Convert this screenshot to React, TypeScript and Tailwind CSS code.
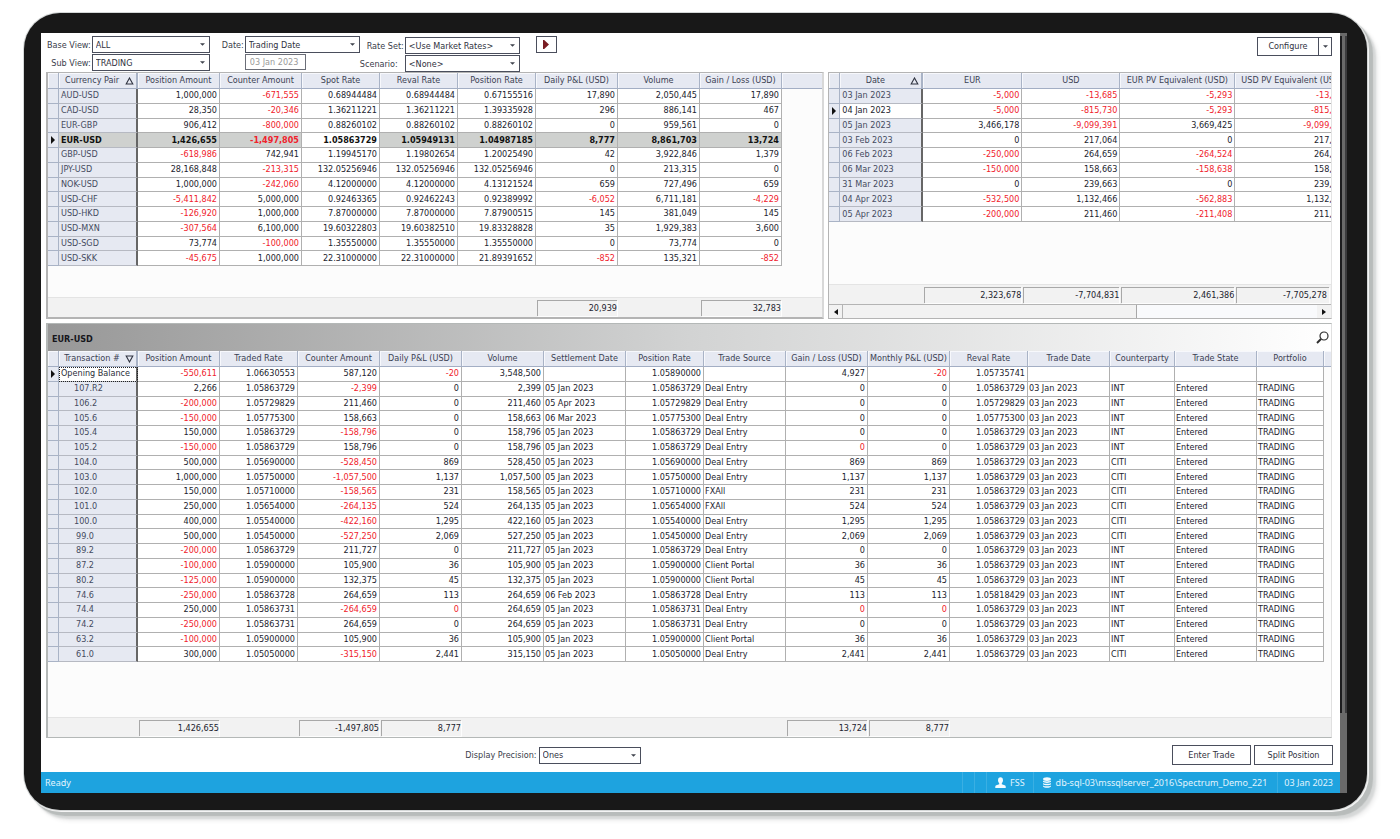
import React from "react";

type Align = "left" | "right";
type Column = { title: string; width: number; align: Align; whiteWhenSelected?: boolean };

const num = (title: string, width: number): Column => ({ title, width, align: "right" });
const txt = (title: string, width: number): Column => ({ title, width, align: "left" });

/* ---------- data ---------- */

const pairColumns: Column[] = [
  num("Position Amount", 82),
  num("Counter Amount", 82),
  { title: "Spot Rate", width: 78, align: "right", whiteWhenSelected: true },
  num("Reval Rate", 78),
  num("Position Rate", 78),
  num("Daily P&L (USD)", 82),
  num("Volume", 82),
  num("Gain / Loss (USD)", 82),
];

const pairRows: string[][] = [
  ["AUD-USD", "1,000,000", "-671,555", "0.68944484", "0.68944484", "0.67155516", "17,890", "2,050,445", "17,890"],
  ["CAD-USD", "28,350", "-20,346", "1.36211221", "1.36211221", "1.39335928", "296", "886,141", "467"],
  ["EUR-GBP", "906,412", "-800,000", "0.88260102", "0.88260102", "0.88260102", "0", "959,561", "0"],
  ["EUR-USD", "1,426,655", "-1,497,805", "1.05863729", "1.05949131", "1.04987185", "8,777", "8,861,703", "13,724"],
  ["GBP-USD", "-618,986", "742,941", "1.19945170", "1.19802654", "1.20025490", "42", "3,922,846", "1,379"],
  ["JPY-USD", "28,168,848", "-213,315", "132.05256946", "132.05256946", "132.05256946", "0", "213,315", "0"],
  ["NOK-USD", "1,000,000", "-242,060", "4.12000000", "4.12000000", "4.13121524", "659", "727,496", "659"],
  ["USD-CHF", "-5,411,842", "5,000,000", "0.92463365", "0.92462243", "0.92389992", "-6,052", "6,711,181", "-4,229"],
  ["USD-HKD", "-126,920", "1,000,000", "7.87000000", "7.87000000", "7.87900515", "145", "381,049", "145"],
  ["USD-MXN", "-307,564", "6,100,000", "19.60322803", "19.60382510", "19.83328828", "35", "1,929,383", "3,600"],
  ["USD-SGD", "73,774", "-100,000", "1.35550000", "1.35550000", "1.35550000", "0", "73,774", "0"],
  ["USD-SKK", "-45,675", "1,000,000", "22.31000000", "22.31000000", "21.89391652", "-852", "135,321", "-852"],
];

const dateColumns: Column[] = [
  num("EUR", 99),
  num("USD", 98),
  num("EUR PV Equivalent (USD)", 115),
  num("USD PV Equivalent (USD)", 115),
];

const dateRows: string[][] = [
  ["03 Jan 2023", "-5,000", "-13,685", "-5,293", "-13,685"],
  ["04 Jan 2023", "-5,000", "-815,730", "-5,293", "-815,730"],
  ["05 Jan 2023", "3,466,178", "-9,099,391", "3,669,425", "-9,099,391"],
  ["03 Feb 2023", "0", "217,064", "0", "217,014"],
  ["06 Feb 2023", "-250,000", "264,659", "-264,524", "264,524"],
  ["06 Mar 2023", "-150,000", "158,663", "-158,638", "158,638"],
  ["31 Mar 2023", "0", "239,663", "0", "239,417"],
  ["04 Apr 2023", "-532,500", "1,132,466", "-562,883", "1,132,101"],
  ["05 Apr 2023", "-200,000", "211,460", "-211,408", "211,408"],
];

const tradeColumns: Column[] = [
  num("Position Amount", 82),
  num("Traded Rate", 78),
  num("Counter Amount", 82),
  num("Daily P&L (USD)", 82),
  num("Volume", 82),
  txt("Settlement Date", 82),
  num("Position Rate", 78),
  txt("Trade Source", 82),
  num("Gain / Loss (USD)", 82),
  num("Monthly P&L (USD)", 82),
  num("Reval Rate", 78),
  txt("Trade Date", 82),
  txt("Counterparty", 65),
  txt("Trade State", 82),
  txt("Portfolio", 67),
];

/* id, position, traded rate, counter, p&l, volume, settlement, source, gain, monthly, reval, counterparty */
const trades: string[][] = [
  ["107.R2", "2,266", "1.05863729", "-2,399", "0", "2,399", "05 Jan 2023", "Deal Entry", "0", "0", "1.05863729", "INT"],
  ["106.2", "-200,000", "1.05729829", "211,460", "0", "211,460", "05 Apr 2023", "Deal Entry", "0", "0", "1.05729829", "INT"],
  ["105.6", "-150,000", "1.05775300", "158,663", "0", "158,663", "06 Mar 2023", "Deal Entry", "0", "0", "1.05775300", "INT"],
  ["105.4", "150,000", "1.05863729", "-158,796", "0", "158,796", "05 Jan 2023", "Deal Entry", "0", "0", "1.05863729", "INT"],
  ["105.2", "-150,000", "1.05863729", "158,796", "0", "158,796", "05 Jan 2023", "Deal Entry", "!0", "0", "1.05863729", "INT"],
  ["104.0", "500,000", "1.05690000", "-528,450", "869", "528,450", "05 Jan 2023", "Deal Entry", "869", "869", "1.05863729", "CITI"],
  ["103.0", "1,000,000", "1.05750000", "-1,057,500", "1,137", "1,057,500", "05 Jan 2023", "Deal Entry", "1,137", "1,137", "1.05863729", "CITI"],
  ["102.0", "150,000", "1.05710000", "-158,565", "231", "158,565", "05 Jan 2023", "FXAll", "231", "231", "1.05863729", "CITI"],
  ["101.0", "250,000", "1.05654000", "-264,135", "524", "264,135", "05 Jan 2023", "FXAll", "524", "524", "1.05863729", "CITI"],
  ["100.0", "400,000", "1.05540000", "-422,160", "1,295", "422,160", "05 Jan 2023", "Deal Entry", "1,295", "1,295", "1.05863729", "CITI"],
  ["99.0", "500,000", "1.05450000", "-527,250", "2,069", "527,250", "05 Jan 2023", "Deal Entry", "2,069", "2,069", "1.05863729", "CITI"],
  ["89.2", "-200,000", "1.05863729", "211,727", "0", "211,727", "05 Jan 2023", "Deal Entry", "0", "0", "1.05863729", "INT"],
  ["87.2", "-100,000", "1.05900000", "105,900", "36", "105,900", "05 Jan 2023", "Client Portal", "36", "36", "1.05863729", "INT"],
  ["80.2", "-125,000", "1.05900000", "132,375", "45", "132,375", "05 Jan 2023", "Client Portal", "45", "45", "1.05863729", "INT"],
  ["74.6", "-250,000", "1.05863728", "264,659", "113", "264,659", "06 Feb 2023", "Deal Entry", "113", "113", "1.05818429", "INT"],
  ["74.4", "250,000", "1.05863731", "-264,659", "!0", "264,659", "05 Jan 2023", "Deal Entry", "!0", "!0", "1.05863729", "INT"],
  ["74.2", "-250,000", "1.05863731", "264,659", "0", "264,659", "05 Jan 2023", "Deal Entry", "0", "0", "1.05863729", "INT"],
  ["63.2", "-100,000", "1.05900000", "105,900", "36", "105,900", "05 Jan 2023", "Client Portal", "36", "36", "1.05863729", "INT"],
  ["61.0", "300,000", "1.05050000", "-315,150", "2,441", "315,150", "05 Jan 2023", "Deal Entry", "2,441", "2,441", "1.05863729", "CITI"],
];

const tradeRows: string[][] = [
  ["Opening Balance", "-550,611", "1.06630553", "587,120", "-20", "3,548,500", "", "1.05890000", "", "4,927", "-20", "1.05735741", "", "", "", ""],
  ...trades.map(([id, pos, rate, counter, pl, vol, settle, source, gain, monthly, reval, party]) => [
    id, pos, rate, counter, pl, vol, settle, rate, source, gain, monthly, reval, "03 Jan 2023", party, "Entered", "TRADING",
  ]),
];

/* ---------- small drawings ---------- */

function SortMark({ down = false }: { down?: boolean }) {
  return (
    <svg viewBox="0 0 9 8" className="h-2 w-[9px] shrink-0" fill="none" stroke="#2f3340" strokeWidth="1.1">
      <path d={down ? "M1.2 1h6.6L4.5 7z" : "M1.2 7h6.6L4.5 1z"} />
    </svg>
  );
}

function Pointer() {
  return (
    <svg viewBox="0 0 4 8" className="mx-auto h-2 w-1" fill="#111">
      <path d="M0 0l4 4-4 4z" />
    </svg>
  );
}

function Caret() {
  return (
    <svg viewBox="0 0 6 3" className="h-[3px] w-[5px]" fill="#3f434d">
      <path d="M0 0h6L3 3z" />
    </svg>
  );
}

/* ---------- controls ---------- */

function Dropdown({ id, value, className }: { id: string; value: string; className: string }) {
  return (
    <div className={`relative ${className}`}>
      <select
        id={id}
        className="block h-[17px] w-full appearance-none border border-[#4a4e5c] bg-white pl-[3px] pr-4 text-[9px] leading-[14px] text-[#30323e]"
      >
        <option>{value}</option>
      </select>
      <span className="pointer-events-none absolute inset-y-0 right-[5px] flex items-center">
        <Caret />
      </span>
    </div>
  );
}

function FieldLabel({ id, children }: { id: string; children: React.ReactNode }) {
  return (
    <label htmlFor={id} className="self-center text-right leading-3 whitespace-nowrap text-[#3a3d4a]">
      {children}
    </label>
  );
}

/* ---------- grid ---------- */

type GridProps = {
  keyTitle: string;
  keyWidth: number;
  sortDown?: boolean;
  columns: Column[];
  rows: string[][];
  current: number;
  highlight?: "row" | "key" | "focus";
  indentKeys?: boolean;
  filler?: boolean;
  className: string;
};

const headCell = "h-4 border-r border-b border-r-[#a9b3c6] border-b-[#a3aec4] bg-[#e6e9f2] p-0 font-normal text-[#3b4152] shadow-[inset_1px_1px_0_#f7f8fc]";

function Grid({ keyTitle, keyWidth, sortDown, columns, rows, current, highlight, indentKeys, filler, className }: GridProps) {
  const keyClass = (i: number, key: string) => {
    if (i === current && highlight === "row") return "bg-[#cfd1cf] pl-0.5 font-bold text-[#111]";
    if (i === current && highlight === "key") return "bg-white pl-0.5 font-normal text-[#22242e]";
    if (i === current && highlight === "focus")
      return "bg-white pl-0.5 font-normal text-[#2a2d38] outline-1 -outline-offset-1 outline-dotted outline-[#222]";
    const indent = !indentKeys ? "pl-0.5" : key.length > 4 ? "pl-[15px]" : "pl-[17px]";
    return `bg-[#e6e9f2] font-normal text-[#454b60] ${indent}`;
  };
  return (
    <table className={`table-fixed border-separate border-spacing-0 bg-white whitespace-nowrap ${className}`}>
      <colgroup>
        <col style={{ width: 11 }} />
        <col style={{ width: keyWidth }} />
        {columns.map((c) => (
          <col key={c.title} style={{ width: c.width }} />
        ))}
        {filler && <col />}
      </colgroup>
      <thead>
        <tr>
          <th className={headCell} aria-label="Current row" />
          <th className={`${headCell} border-r-2 border-r-[#666]`}>
            <div className="flex items-center pr-0.5">
              <span className="flex-1">{keyTitle}</span>
              <SortMark down={sortDown} />
            </div>
          </th>
          {columns.map((c) => (
            <th key={c.title} className={headCell}>
              {c.title}
            </th>
          ))}
          {filler && <th className={`${headCell} border-r-0`} aria-label="Empty" />}
        </tr>
      </thead>
      <tbody>
        {rows.map(([key, ...cells], i) => {
          const selected = i === current && highlight === "row";
          return (
            <tr key={key}>
              <td className="border-r border-b border-[#a9b3c6] bg-[#e6e9f2] p-0">{i === current && <Pointer />}</td>
              <th
                scope="row"
                className={`border-r-2 border-b border-r-[#666] border-b-[#b6b9c2] py-0 pr-0 text-left ${keyClass(i, key)}`}
              >
                {key}
              </th>
              {cells.map((cell, j) => {
                const flagged = cell.startsWith("!");
                const red = flagged || cell.startsWith("-");
                const col = columns[j];
                return (
                  <td
                    key={col.title}
                    className={[
                      "border-r border-b border-[#b0b0b0] py-0",
                      col.align === "right" ? "pr-0.5 pl-0 text-right" : "pl-px pr-0 text-left",
                      selected ? "font-bold" : "",
                      selected && !col.whiteWhenSelected ? "bg-[#cfd1cf]" : "bg-white",
                      red ? "text-[#f0222c]" : selected ? "text-[#111]" : "text-[#22232e]",
                    ].join(" ")}
                  >
                    {flagged ? cell.slice(1) : cell}
                  </td>
                );
              })}
              {filler && <td className="bg-[#fcfcfc] p-0" />}
            </tr>
          );
        })}
      </tbody>
    </table>
  );
}

function Totals({ keyWidth, columns, totals, stretch }: { keyWidth: number; columns: Column[]; totals: Record<number, string>; stretch?: boolean }) {
  return (
    <div className="flex h-5 shrink-0 items-center border-t border-[#e4e4e4] bg-[#f2f2f2]">
      <div className="shrink-0" style={{ width: 11 + keyWidth }} />
      {columns.map((c, i) => {
        const last = stretch && i === columns.length - 1;
        return (
          <div key={c.title} className={last ? "min-w-0 flex-1 pr-0.5" : "shrink-0 pr-px"} style={last ? undefined : { width: c.width }}>
            {totals[i] && (
              <div className={`ml-px h-4 border-t border-l border-[#a8a8a8] text-right leading-[15px] text-[#22232e] shadow-[1px_1px_0_#fdfdfd] ${last ? "pr-0.5" : ""}`}>
                {totals[i]}
              </div>
            )}
          </div>
        );
      })}
    </div>
  );
}

/* ---------- page ---------- */

export default function App() {
  return (
    <div className="min-h-screen overflow-hidden bg-white pt-[13px] pr-[33px] pb-[29px] pl-6 font-['DejaVu_Sans_Condensed','DejaVu_Sans',sans-serif] text-[9px] leading-[13px]">
      <div className="flex min-h-[calc(100vh-42px)] rounded-[36px] bg-[#181818] pt-5 pr-5 pb-[17px] pl-[17px] shadow-[0_0_0_1px_#d4d7d7,1px_1px_0_1px_#f4f4f4,5px_5px_1px_1px_#b8bcbb,8px_8px_2px_1px_#d6d8d8,10px_10px_4px_1px_#eeeeee]">
        <main className="flex min-w-0 flex-1 flex-col bg-white">
          <div className="flex items-start pt-[3px] pr-2 pl-1.5">
            <div className="grid grid-cols-[auto_118px] gap-x-px gap-y-px">
              <FieldLabel id="base-view">Base View:</FieldLabel>
              <Dropdown id="base-view" value="ALL" className="w-full" />
              <FieldLabel id="sub-view">Sub View:</FieldLabel>
              <Dropdown id="sub-view" value="TRADING" className="w-full" />
            </div>
            <div className="ml-3 grid grid-cols-[auto_115px] gap-x-px gap-y-px">
              <FieldLabel id="date-kind">Date:</FieldLabel>
              <Dropdown id="date-kind" value="Trading Date" className="w-full" />
              <input
                aria-label="Trading date"
                disabled
                defaultValue="03 Jan 2023"
                className="col-start-2 h-4 w-[61px] border border-[#6b6e78] bg-white px-1 text-[9px] text-[#9a9a9a]"
              />
            </div>
            <div className="grid grid-cols-[44px_115px] gap-x-px gap-y-px pt-px">
              <FieldLabel id="rate-set">Rate Set:</FieldLabel>
              <Dropdown id="rate-set" value="<Use Market Rates>" className="w-full" />
              <label htmlFor="scenario" className="self-center leading-3 text-[#3a3d4a]">
                Scenario:
              </label>
              <Dropdown id="scenario" value="<None>" className="w-full" />
            </div>
            <button type="button" aria-label="Run" className="ml-4 flex h-[17px] w-[21px] items-center justify-center border border-[#4a4e5c] bg-white">
              <svg viewBox="0 0 6 9" className="h-[9px] w-1.5" fill="#7a1c22">
                <path d="M0 0h1.2L6 4.5 1.2 9H0z" />
              </svg>
            </button>
            <div className="mt-px ml-auto flex h-[19px] border border-[#4a4e5c] text-[#30323e]">
              <button type="button" className="w-[60px]">
                Configure
              </button>
              <button type="button" aria-label="Configure options" className="flex w-[13px] items-center justify-center border-l border-[#4a4e5c]">
                <Caret />
              </button>
            </div>
          </div>

          <div className="flex gap-1 pr-2 pl-[5px]">
            <section className="flex h-[247px] min-w-0 flex-[778_1_0%] flex-col overflow-hidden border-2 border-t border-[#b4b4b4] border-r-[#d8d8d8] bg-[#fcfcfc]">
              <Grid keyTitle="Currency Pair" keyWidth={79} columns={pairColumns} rows={pairRows} current={3} highlight="row" filler className="h-[193px] w-full" />
              <div className="flex-1" />
              <Totals keyWidth={79} columns={pairColumns} totals={{ 5: "20,939", 7: "32,783" }} />
            </section>

            <section className="flex h-[247px] min-w-0 flex-[504_1_0%] flex-col overflow-hidden border border-[#b4b4b4] border-r-[#e4e4e4] bg-[#fcfcfc]">
              <Grid keyTitle="Date" keyWidth={83} columns={dateColumns} rows={dateRows} current={1} highlight="key" className="h-[149px] w-[521px]" />
              <div className="flex-1" />
              <Totals keyWidth={83} columns={dateColumns} totals={{ 0: "2,323,678", 1: "-7,704,831", 2: "2,461,386", 3: "-7,705,278" }} stretch />
              <div className="flex h-3.5 shrink-0 border-t border-[#b4b4b4] bg-[#f9fafc]">
                <button type="button" aria-label="Scroll left" className="flex w-3.5 items-center justify-center border-r border-[#b4b4b4] bg-[#f2f2f2]">
                  <svg viewBox="0 0 4 6" className="h-1.5 w-1" fill="#111">
                    <path d="M4 0L0 3l4 3z" />
                  </svg>
                </button>
                <div className="flex-1">
                  <div className="h-full w-[62%] border-r border-[#a8a8a8] bg-[#f2f2f2]" />
                </div>
                <button type="button" aria-label="Scroll right" className="flex w-3.5 items-center justify-center bg-[#f2f2f2]">
                  <svg viewBox="0 0 4 6" className="h-1.5 w-1" fill="#111">
                    <path d="M0 0l4 3-4 3z" />
                  </svg>
                </button>
              </div>
            </section>
          </div>

          <section className="mt-1 mr-2 ml-[5px] flex flex-1 flex-col overflow-hidden border border-l-2 border-[#b4b8b7] border-r-[#e0e0e0] bg-[#fcfcfc]">
            <header className="flex h-[27px] shrink-0 items-center justify-between bg-linear-to-r from-[#989898] via-[#d2d3d3] to-white pr-0.5 pl-1">
              <h2 className="pt-1 font-bold text-[#16161c]">EUR-USD</h2>
              <button type="button" aria-label="Find">
                <svg viewBox="0 0 13 13" className="size-[13px]" fill="none" stroke="#2e2e2e">
                  <circle cx="8" cy="5" r="4" strokeWidth="1.2" />
                  <path d="M5 8L1 12" strokeWidth="1.9" />
                </svg>
              </button>
            </header>
            <Grid
              keyTitle="Transaction #"
              keyWidth={79}
              sortDown
              columns={tradeColumns}
              rows={tradeRows}
              current={0}
              highlight="focus"
              indentKeys
              filler
              className="h-[311px] w-full"
            />
            <div className="flex-1" />
            <Totals keyWidth={79} columns={tradeColumns} totals={{ 0: "1,426,655", 2: "-1,497,805", 3: "8,777", 8: "13,724", 9: "8,777" }} />
          </section>

          <div className="grid h-[34px] shrink-0 grid-cols-[38fr_auto_62fr] items-center pr-[7px]">
            <div />
            <div className="flex items-center gap-0.5">
              <FieldLabel id="precision">Display Precision:</FieldLabel>
              <Dropdown id="precision" value="Ones" className="w-[102px]" />
            </div>
            <div className="flex justify-end gap-[3px] text-[#30323e]">
              <button type="button" className="h-5 w-[79px] border border-[#4a4e5c]">
                Enter Trade
              </button>
              <button type="button" className="h-5 w-[79px] border border-[#4a4e5c]">
                Split Position
              </button>
            </div>
          </div>

          <footer className="flex h-[21px] shrink-0 items-stretch bg-[#1ea3df] font-['Noto_Sans',sans-serif] leading-[21px] text-[#e2f4fd]">
            <span className="flex-1 pl-1">Ready</span>
            <span className="w-3 border-l border-[#3aafe3]" />
            <span className="w-3 border-l border-[#3aafe3]" />
            <span className="flex items-center gap-1 border-l border-[#3aafe3] px-2">
              <svg viewBox="0 0 12 12" className="size-[11px]" fill="#f4fbff">
                <ellipse cx="6" cy="3.6" rx="2.7" ry="3.4" />
                <path d="M4.6 6h2.8v1.8l3.2 1.2c.8.3 1.1.9 1.1 1.6V12H.3v-1.4c0-.7.3-1.3 1.1-1.6l3.2-1.2z" />
              </svg>
              FSS
            </span>
            <span className="flex items-center gap-1 border-l border-[#3aafe3] pr-2.5 pl-2">
              <svg viewBox="0 0 10 12" className="h-[11px] w-2.5" fill="#f4fbff">
                <ellipse cx="5" cy="2.3" rx="4.3" ry="2" />
                <path d="M.7 3.8c1.8 1.3 6.8 1.3 8.6 0v1.5c-1.2 1.5-7.4 1.5-8.6 0z" />
                <path d="M.7 6.5c1.8 1.3 6.8 1.3 8.6 0V8C8.100 9.500 1.900 9.500.7 8z" />
                <path d="M.7 9.2c1.8 1.3 6.8 1.3 8.6 0v1.100c-1.200 1.900-7.400 1.900-8.600 0z" />
              </svg>
              db-sql-03\mssqlserver_2016\Spectrum_Demo_221
            </span>
            <span className="border-l border-[#3aafe3] pr-[7px] pl-1.5">03 Jan 2023</span>
          </footer>
        </main>
        <div className="flex w-[7px] shrink-0 flex-col bg-[#6a6a6a] pt-[3px] pb-20" aria-hidden="true">
          <div className="flex flex-1">
            <div className="h-full w-0.5 bg-[#1d1d1f]" />
            <div className="h-full flex-1 bg-[#6a6a6a]" />
            <div className="h-full w-0.5 bg-[#3c3c3e]" />
          </div>
        </div>
      </div>
    </div>
  );
}
